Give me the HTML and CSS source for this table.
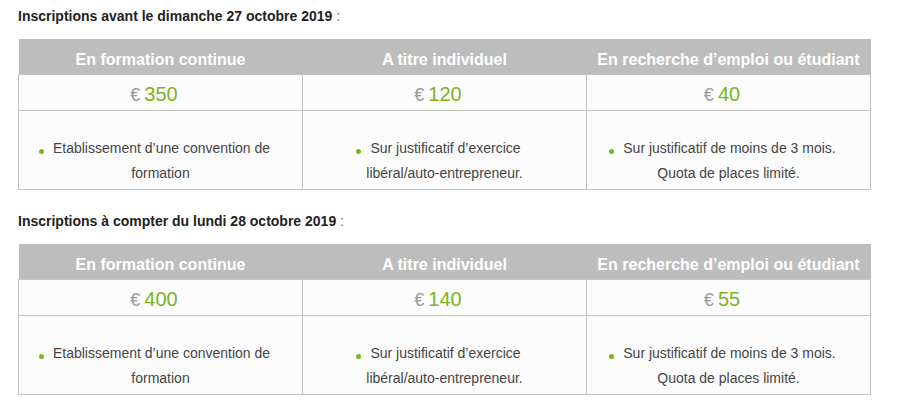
FILE: index.html
```html
<!DOCTYPE html>
<html lang="fr">
<head>
<meta charset="utf-8">
<link rel="stylesheet" href="styles.css">
</head>
<body>
<div class="page">
  <section class="block">
    <p class="title"><strong>Inscriptions avant le dimanche 27 octobre 2019</strong> :</p>
    <table class="prices">
      <tr class="head">
        <th>En formation continue</th>
        <th>A titre individuel</th>
        <th>En recherche d’emploi ou étudiant</th>
      </tr>
      <tr class="price">
        <td><span class="cur">€</span><span class="amt">350</span></td>
        <td><span class="cur">€</span><span class="amt">120</span></td>
        <td><span class="cur">€</span><span class="amt">40</span></td>
      </tr>
      <tr class="desc">
        <td><span class="dot"></span>Etablissement d’une convention de formation</td>
        <td><span class="dot"></span>Sur justificatif d’exercice libéral/auto-entrepreneur.</td>
        <td><span class="dot"></span>Sur justificatif de moins de 3 mois. Quota de places limité.</td>
      </tr>
    </table>
  </section>
  <section class="block">
    <p class="title"><strong>Inscriptions à compter du lundi 28 octobre 2019</strong> :</p>
    <table class="prices">
      <tr class="head">
        <th>En formation continue</th>
        <th>A titre individuel</th>
        <th>En recherche d’emploi ou étudiant</th>
      </tr>
      <tr class="price">
        <td><span class="cur">€</span><span class="amt">400</span></td>
        <td><span class="cur">€</span><span class="amt">140</span></td>
        <td><span class="cur">€</span><span class="amt">55</span></td>
      </tr>
      <tr class="desc">
        <td><span class="dot"></span>Etablissement d’une convention de formation</td>
        <td><span class="dot"></span>Sur justificatif d’exercice libéral/auto-entrepreneur.</td>
        <td><span class="dot"></span>Sur justificatif de moins de 3 mois. Quota de places limité.</td>
      </tr>
    </table>
  </section>
</div>
</body>
</html>
```
FILE: styles.css
```css
html, body {
  margin: 0;
  padding: 0;
  background: #ffffff;
}
body {
  font-family: "Liberation Sans", Arial, sans-serif;
  color: #444444;
}
.page {
  padding: 7px 31px 0 18px;
}
.block {
  margin-bottom: 22px;
}
.title {
  margin: 0 0 14px 0;
  font-size: 14px;
  line-height: 18px;
  color: #666666;
}
.title strong {
  color: #222222;
  font-weight: bold;
}
.prices {
  width: 100%;
  border-collapse: collapse;
  table-layout: fixed;
}
.prices th {
  background: #bdbdbd;
  color: #ffffff;
  font-weight: bold;
  font-size: 16px;
  line-height: 29px;
  padding: 6px 4px 0 4px;
  text-align: center;
  vertical-align: top;
  border: none;
}
.prices td {
  border: 1px solid #c4c4c4;
  background: #fcfcfc;
  text-align: center;
  vertical-align: top;
}
.price td {
  padding: 5px 13px 0 0;
  line-height: 29px;
}
.cur {
  font-size: 18px;
  color: #999999;
  margin-right: 4px;
}
.amt {
  font-size: 20px;
  color: #7ab51d;
}
.desc td {
  font-size: 14px;
  line-height: 25px;
  padding: 25px 28px 3px 28px;
  color: #444444;
}
.dot {
  display: inline-block;
  width: 5px;
  height: 5px;
  border-radius: 50%;
  background: #7ab51d;
  margin-left: -12px;
  margin-right: 9px;
  vertical-align: middle;
  position: relative;
  top: 2px;
}
```
